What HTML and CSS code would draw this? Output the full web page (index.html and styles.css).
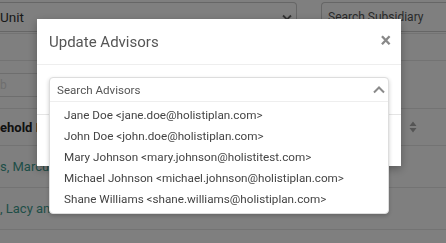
FILE: index.html
```html
<!DOCTYPE html>
<html>
<head>
<meta charset="utf-8">
<link rel="stylesheet" href="styles.css">
</head>
<body>
<div class="page">
  <div class="filters">
    <div class="unit-select"><span>Unit</span>
      <svg class="chev" width="10" height="7" viewBox="0 0 10 7"><path d="M1 1.5 L5 5.5 L9 1.5" fill="none" stroke="#666" stroke-width="1.8"/></svg>
    </div>
    <div class="subsidiary">Search Subsidiary</div>
  </div>
  <div class="toolbar">
    <div class="length-box">b</div>
  </div>
  <div class="table">
    <div class="row head">
      <span class="cell-name">ehold Name</span>
      <svg class="sort" width="8" height="12" viewBox="0 0 8 12"><path d="M4 0.5 L7.5 5 H0.5 Z M4 11.5 L7.5 7 H0.5 Z" fill="#aaa"/></svg>
    </div>
    <div class="row"><span class="cell-name link">s, Marcus</span></div>
    <div class="row"><span class="cell-name link">, Lacy and</span></div>
    <div class="row last"></div>
  </div>
</div>

<div class="overlay">
  <div class="modal">
    <div class="modal-header">
      <h4 class="modal-title">Update Advisors</h4>
      <span class="close">×</span>
    </div>
    <div class="modal-body">
      <div class="select-wrap">
        <div class="multiselect">
          <div class="ms-search">
            <span>Search Advisors</span>
            <svg width="12" height="8" viewBox="0 0 12 8"><path d="M1 6.5 L6 1.5 L11 6.5" fill="none" stroke="#8a8a8a" stroke-width="2"/></svg>
          </div>
          <ul class="ms-list">
            <li>Jane Doe &lt;jane.doe@holistiplan.com&gt;</li>
            <li>John Doe &lt;john.doe@holistiplan.com&gt;</li>
            <li>Mary Johnson &lt;mary.johnson@holistitest.com&gt;</li>
            <li>Michael Johnson &lt;michael.johnson@holistiplan.com&gt;</li>
            <li>Shane Williams &lt;shane.williams@holistiplan.com&gt;</li>
          </ul>
        </div>
      </div>
    </div>
    <div class="modal-footer"></div>
  </div>
</div>
</body>
</html>
```
FILE: styles.css
```css
html, body {
  margin: 0;
  padding: 0;
}
body {
  width: 446px;
  height: 243px;
  overflow: hidden;
  background: #fff;
  font-family: Roboto, "Liberation Sans", sans-serif;
  color: #333;
}
.page {
  width: 446px;
  height: 243px;
  overflow: hidden;
}
.filters {
  display: flex;
  gap: 24px;
  padding-top: 2px;
  height: 31px;
  border-bottom: 1px solid #e6e6e6;
}
.unit-select {
  flex: 0 0 297px;
  box-sizing: border-box;
  height: 30px;
  border: 1px solid #ccc;
  border-left: none;
  border-radius: 0 4px 4px 0;
  display: flex;
  align-items: center;
  justify-content: space-between;
  padding-right: 4px;
  font-size: 13.5px;
  color: #333;
}
.subsidiary {
  flex: 1;
  box-sizing: border-box;
  height: 30px;
  border: 1px solid #ccc;
  border-right: none;
  border-radius: 4px 0 0 4px;
  display: flex;
  align-items: center;
  padding-left: 6px;
  font-size: 12px;
  color: #555;
}
.toolbar {
  margin-top: 26px;
  height: 48px;
  border-top: 1px solid #e6e6e6;
  padding-top: 12px;
  box-sizing: border-box;
}
.length-box {
  width: 60px;
  height: 24px;
  box-sizing: border-box;
  border: 1px solid #ddd;
  border-left: none;
  font-size: 12px;
  color: #ddd;
  line-height: 22px;
}
.table {
  border-top: 1px solid #e6e6e6;
}
.row {
  height: 41px;
  border-bottom: 1px solid #e6e6e6;
  display: flex;
  align-items: center;
  justify-content: space-between;
  padding-right: 29px;
  font-size: 13px;
}
.row.head {
  height: 36px;
  font-weight: bold;
  color: #222;
}
.row.last {
  height: 20px;
}
.link {
  color: #3f9d8f;
}
.overlay {
  position: fixed;
  inset: 0;
  background: rgba(0, 0, 0, 0.5);
}
.modal {
  margin: 19px 0 0 37px;
  width: 364px;
  background: #fff;
  box-shadow: 0 3px 9px rgba(0, 0, 0, 0.3);
}
.modal-header {
  height: 46px;
  box-sizing: border-box;
  border-bottom: 1px solid #eee;
  display: flex;
  align-items: center;
  justify-content: space-between;
  padding: 0 10px 0 12px;
}
.modal-title {
  margin: 0;
  font-size: 15px;
  font-weight: normal;
  color: #555;
}
.close {
  font-size: 20px;
  font-weight: bold;
  color: #888;
  line-height: 1;
  margin-top: -3px;
}
.modal-body {
  padding: 12px;
}
.select-wrap {
  position: relative;
  height: 25px;
}
.multiselect {
  position: absolute;
  top: 0;
  left: 0;
  right: 0;
  background: #fff;
  border: 1px solid #ddd;
  border-radius: 4px;
  box-shadow: 0 2px 4px rgba(0, 0, 0, 0.2);
  z-index: 2;
}
.ms-search {
  height: 23px;
  border-bottom: 1px solid #eee;
  display: flex;
  align-items: center;
  justify-content: space-between;
  padding: 0 3px 0 7px;
  font-size: 11.6px;
  color: #555;
}
.ms-list {
  list-style: none;
  margin: 0;
  padding: 3px 0 3px;
}
.ms-list li {
  height: 21px;
  line-height: 21px;
  padding-left: 14px;
  font-size: 11.7px;
  color: #444;
  white-space: nowrap;
}
.modal-footer {
  height: 51px;
  border-top: 1px solid #e5e5e5;
}
```
